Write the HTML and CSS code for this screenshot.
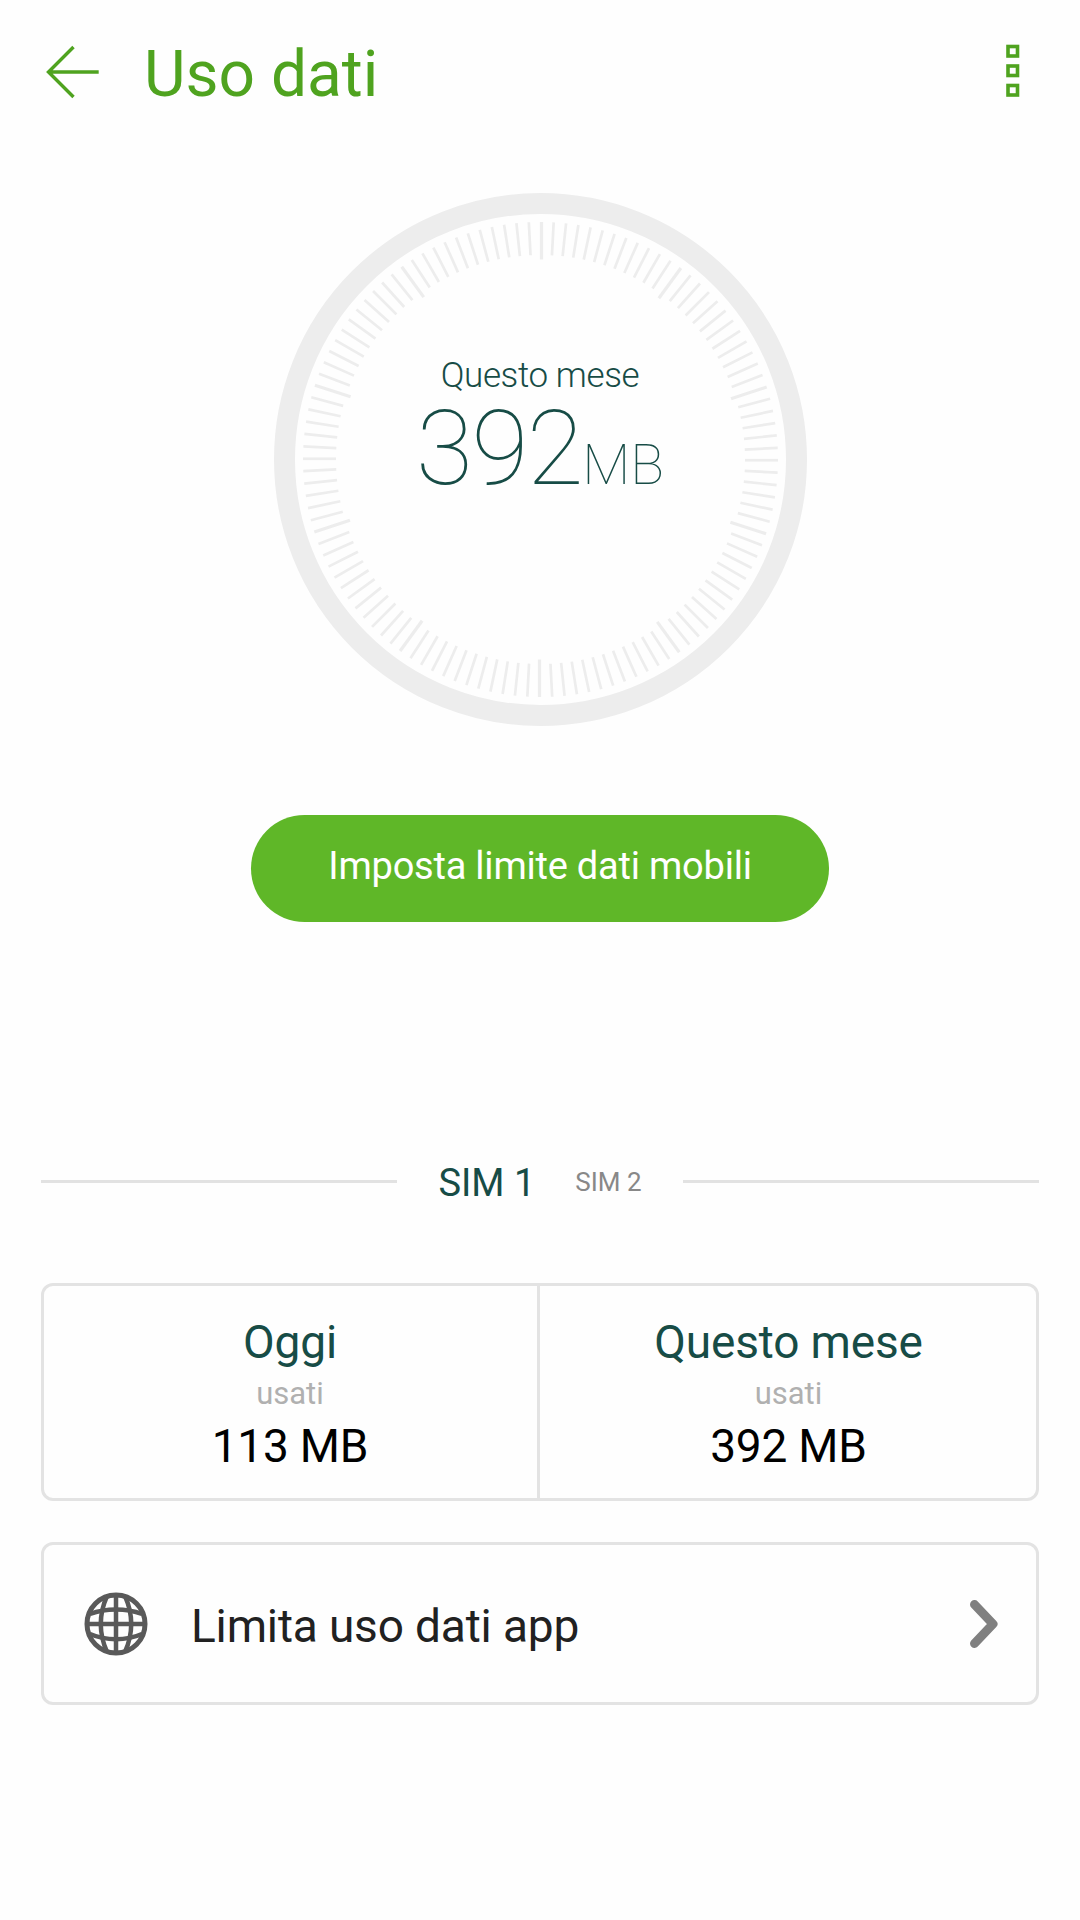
FILE: index.html
```html
<!DOCTYPE html>
<html lang="it">
<head>
<meta charset="UTF-8">
<title>Uso dati</title>
<link rel="stylesheet" href="styles.css">
</head>
<body>
<header class="header">
  <svg class="back-icon" width="54" height="54" viewBox="0 0 54 54">
    <path d="M53.700 27H4M28.500 2L3.500 27l25 25"/>
  </svg>
  <h1 class="title">Uso dati</h1>
  <svg class="menu-icon" width="14" height="54" viewBox="0 0 14 54">
    <rect x="2" y="2.500" width="9.500" height="9.500"/>
    <rect x="2" y="22" width="9.500" height="9.500"/>
    <rect x="2" y="41.500" width="9.500" height="9.500"/>
  </svg>
</header>

<main>
  <div class="gauge">
    <svg class="dial" width="533" height="533" viewBox="-266.5 -266.5 533 533">
      <circle r="256"/>
      <g id="ticks"></g>
    </svg>
    <div class="gauge-text">
      <div class="gauge-label">Questo mese</div>
      <div class="gauge-value">392<span class="gauge-unit">MB</span></div>
    </div>
  </div>

  <button class="limit-button">Imposta limite dati mobili</button>

  <div class="tabs">
    <span class="line"></span>
    <span class="tab active">SIM 1</span>
    <span class="tab">SIM 2</span>
    <span class="line"></span>
  </div>

  <div class="card usage">
    <div class="usage-cell">
      <div class="usage-title">Oggi</div>
      <div class="usage-sub">usati</div>
      <div class="usage-value">113 MB</div>
    </div>
    <div class="usage-cell">
      <div class="usage-title">Questo mese</div>
      <div class="usage-sub">usati</div>
      <div class="usage-value">392 MB</div>
    </div>
  </div>

  <div class="card app-limit">
    <svg class="globe-icon" width="64" height="64" viewBox="-32 -32 64 64">
      <circle r="29"/>
      <path d="M0 -29V29M-29 0H29"/>
      <path d="M-9 -28C-17 -10 -17 10 -9 28M9 -28C17 -10 17 10 9 28"/>
      <path d="M-26 -10C-10 -16 10 -16 26 -10M-26 10C-10 17 10 17 26 10"/>
    </svg>
    <span class="app-limit-text">Limita uso dati app</span>
    <svg class="chevron-icon" width="28" height="48" viewBox="0 0 28 48">
      <path d="M4.500 4.500L23 24L4.500 43.500"/>
    </svg>
  </div>
</main>

<script>
// Dial ticks: one every 3 degrees, a longer one every 36
const ticks = document.getElementById('ticks');

for (let i = 0; i < 120; i++) {
  const major = i % 12 === 0;
  const tick = document.createElementNS('http://www.w3.org/2000/svg', 'rect');
  tick.setAttribute('x', -0.6);
  tick.setAttribute('y', -237.5);
  tick.setAttribute('width', major ? 3.2 : 2.7);
  tick.setAttribute('height', major ? 37.5 : 33);
  tick.setAttribute('transform', `rotate(${i * 3})`);
  ticks.appendChild(tick);
}
</script>
</body>
</html>
```

FILE: styles.css
```css
* {
  box-sizing: border-box;
}
body {
  margin: 0;
  font-family: Roboto, sans-serif;
  background-color: #fefefe;
}
.header {
  display: flex;
  align-items: center;
  height: 144px;
  padding: 0 60px 0 45px;
  color: #4fa31f;
}
.back-icon {
  fill: none;
  stroke: #4fa31f;
  stroke-width: 3.4;
}
.title {
  flex: 1;
  margin: 0;
  padding: 4px 0 0 45px;
  font-size: 64px;
  font-weight: 400;
}
.menu-icon {
  margin-bottom: 2px;
  fill: none;
  stroke: #4fa31f;
  stroke-width: 3.6;
}
main {
  display: flex;
  flex-direction: column;
  align-items: center;
  padding: 49px 41px 0;
}
.gauge {
  display: grid;
  justify-items: center;
}
.dial, .gauge-text {
  grid-area: 1 / 1;
}
.dial circle {
  fill: none;
  stroke: #ededed;
  stroke-width: 21;
}
.dial rect {
  fill: #ededed;
}
.gauge-text {
  padding-top: 162px;
  color: #174c46;
  text-align: center;
}
.gauge-label {
  font-size: 35px;
  font-weight: 300;
  letter-spacing: -0.4px;
  line-height: 42px;
}
.gauge-value {
  margin-top: -3px;
  font-size: 104px;
  font-weight: 100;
  letter-spacing: -1.5px;
  line-height: 110px;
}
.gauge-unit {
  font-size: 56px;
  letter-spacing: 0;
}
.limit-button {
  width: 578px;
  height: 107px;
  margin-top: 89px;
  padding: 0 0 6px;
  border: none;
  border-radius: 54px;
  background-color: #5fb728;
  color: white;
  font-family: inherit;
  font-size: 38px;
  letter-spacing: -0.22px;
}
.tabs {
  display: flex;
  align-items: center;
  align-self: stretch;
  height: 79px;
  margin-top: 220px;
}
.line {
  flex: 1;
  height: 3px;
  background-color: #e2e2e2;
}
.tab {
  padding: 1px 41px 0 0;
  color: #888888;
  font-size: 26px;
}
.tab.active {
  padding: 3px 40px 0 41px;
  color: #174c46;
  font-size: 38px;
}
.card {
  display: flex;
  align-self: stretch;
  border: 3px solid #e3e3e3;
  border-radius: 12px;
}
.usage {
  height: 218px;
  margin-top: 62px;
}
.usage-cell {
  flex: 1;
  padding-top: 29px;
  text-align: center;
}
.usage-cell:first-child {
  flex: 0 0 496px;
  padding-right: 1px;
  border-right: 3px solid #e3e3e3;
}
.usage-cell:last-child {
  padding-left: 1px;
}
.usage-title {
  color: #174c46;
  font-size: 46px;
  letter-spacing: -0.15px;
  line-height: 54px;
}
.usage-sub {
  margin: 7px 0;
  color: #b0b0b0;
  font-size: 31px;
  line-height: 36px;
}
.usage-value {
  color: black;
  font-size: 46px;
  letter-spacing: -0.2px;
  line-height: 54px;
}
.app-limit {
  align-items: center;
  height: 163px;
  margin-top: 41px;
  padding: 0 38px 0 40px;
}
.globe-icon {
  fill: none;
  stroke: #595959;
  stroke-width: 4.5;
}
.globe-icon circle {
  stroke-width: 5;
}
.app-limit-text {
  flex: 1;
  padding: 5px 0 0 43px;
  color: #212121;
  font-size: 46px;
  letter-spacing: -0.15px;
}
.chevron-icon {
  fill: none;
  stroke: #808080;
  stroke-width: 9;
  stroke-linecap: round;
  stroke-linejoin: round;
}
```
